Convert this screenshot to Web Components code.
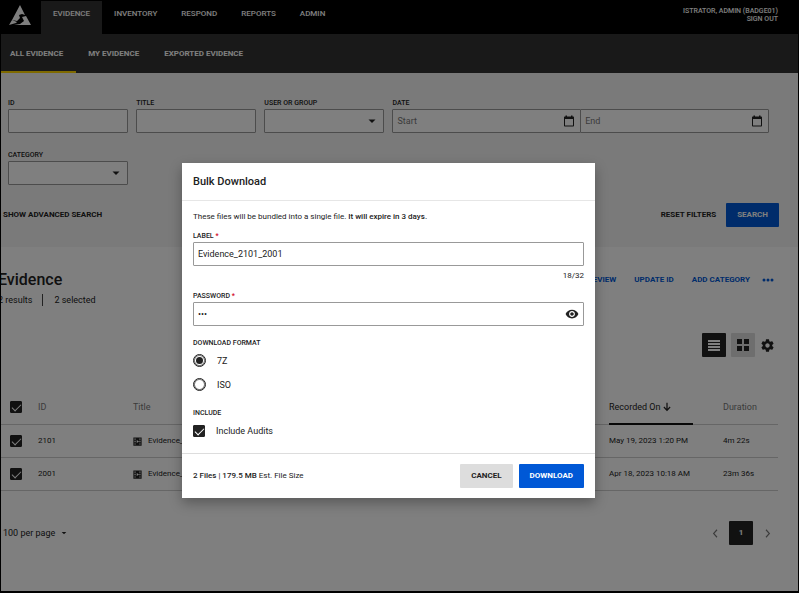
<!DOCTYPE html>
<html lang="en">
<head>
<meta charset="utf-8">
<meta name="viewport" content="width=device-width, initial-scale=1">
<title>Evidence</title>
<style>
    body {
        margin: 0;
        font-family: Roboto, "Liberation Sans", sans-serif;
        font-size: 9px;
        line-height: 12px;
        color: #222;
        background: #fff;
    }
</style>
</head>
<body>
<evidence-page></evidence-page>

<script>
const ICONS = {
    logo: `<path fill-rule="evenodd" d="M11 0l5 10-3-1-3 1 1 3-3 3-5-1zM17 11l5 9H5l6-1 4-3-2-4zM3 15l5 2-1 1-7 2z"/>`,
    caret: `<path d="M5 9h14l-7 7z"/>`,
    calendar: `<path d="M20 3h-1V1h-3v2H8V1H5v2H4c-1.100 0-2 .9-2 2v16c0 1.100.9 2 2 2h16c1.100 0 2-.9 2-2V5c0-1.100-.9-2-2-2zm0 18H4V8h16z"/>`,
    eye: `<path d="M12 4.500C7 4.500 2.730 7.610 1 12c1.730 4.390 6 7.500 11 7.500s9.270-3.110 11-7.500c-1.730-4.390-6-7.500-11-7.500zM12 17c-2.760 0-5-2.240-5-5s2.240-5 5-5 5 2.240 5 5-2.240 5-5 5zm0-8c-1.660 0-3 1.340-3 3s1.340 3 3 3 3-1.340 3-3-1.340-3-3-3z"/>`,
    dots: `<circle cx="4" cy="12" r="3"/><circle cx="12" cy="12" r="3"/><circle cx="20" cy="12" r="3"/>`,
    list: `<path d="M0 2h24v4H0zM0 8h24v4H0zM0 14h24v4H0zM0 20h24v4H0z"/>`,
    grid: `<path d="M0 0h10v10H0zM14 0h10v10H14zM0 14h10v10H0zM14 14h10v10H14z"/>`,
    gear: `<path d="M19.430 12.980c.04-.32.07-.64.07-.98s-.03-.66-.07-.98l2.110-1.650c.19-.15.24-.42.12-.64l-2-3.460c-.12-.22-.39-.3-.61-.22l-2.490 1c-.52-.4-1.080-.73-1.690-.98l-.38-2.650C14.460 2.180 14.250 2 14 2h-4c-.25 0-.46.18-.49.42l-.38 2.650c-.61.25-1.170.59-1.690.98l-2.490-1c-.23-.09-.49 0-.61.22l-2 3.460c-.13.22-.07.49.12.64l2.110 1.650c-.04.32-.07.65-.07.98s.03.66.07.98l-2.110 1.650c-.19.15-.24.42-.12.64l2 3.460c.12.22.39.3.61.22l2.490-1c.52.4 1.080.73 1.690.98l.38 2.650c.03.24.24.42.49.42h4c.25 0 .46-.18.49-.42l.38-2.650c.61-.25 1.170-.59 1.690-.98l2.490 1c.23.09.49 0 .61-.22l2-3.460c.12-.22.07-.49-.12-.64zM12 15.500c-1.930 0-3.500-1.570-3.500-3.500s1.570-3.500 3.500-3.500 3.500 1.570 3.500 3.500-1.570 3.500-3.500 3.500z"/>`,
    video: `<path fill-rule="evenodd" d="M1 1h22v22H1zM4 4v3h3V4zM4 10v4h3v-4zM4 17v3h3v-3zM17 4v3h3V4zM17 10v4h3v-4zM17 17v3h3v-3zM10 8v8l6-4z"/>`,
    arrow: `<path d="M10.500 2h3v14l5-5 2 2-8.500 9-8.500-9 2-2 5 5z"/>`,
    prev: `<path d="M16 2L7 12l9 10" fill="none" stroke="currentColor" stroke-width="3"/>`,
    next: `<path d="M8 2l9 10-9 10" fill="none" stroke="currentColor" stroke-width="3"/>`
};

const icon = (name, size) => {
    const box = name === "logo" ? "0 0 22 20" : "0 0 24 24";
    return `<svg width="${size}" height="${size}" viewBox="${box}" fill="currentColor" aria-hidden="true">${ICONS[name]}</svg>`;
};

// Shared by every shadow root
const BASE = `
    * { box-sizing: border-box; }
    button, input, select { font: inherit; color: inherit; margin: 0; border-radius: 0; }
    button { background: none; border: 0; padding: 0; cursor: pointer; }
    a { color: inherit; text-decoration: none; }
    svg { display: block; flex: none; }
`;

class AppHeader extends HTMLElement {
    constructor() {
        super();
        this.attachShadow({ mode: "open" }).innerHTML = `
        <style>
            ${BASE}
            :host {
                display: flex;
                height: 33px;
                background: #000;
                color: #fff;
                font-size: 8px;
                font-weight: 500;
            }
            .logo { padding: 3px 10px 0 8px; }
            nav { display: flex; flex: 1; }
            nav a { padding: 7px 12px 0; }
            nav a.active { background: #333; }
            .user {
                padding: 6px 20px 0 0;
                text-align: right;
                font-size: 7px;
                line-height: 8px;
            }
            .user a { display: block; }
        </style>
        <a class="logo" href="#" aria-label="Home">${icon("logo", 22)}</a>
        <nav>
            <a class="active" href="#">EVIDENCE</a>
            <a href="#">INVENTORY</a>
            <a href="#">RESPOND</a>
            <a href="#">REPORTS</a>
            <a href="#">ADMIN</a>
        </nav>
        <div class="user">ISTRATOR, ADMIN (BADGE01)<a href="#">SIGN OUT</a></div>
        `;
    }
}

class SubNav extends HTMLElement {
    constructor() {
        super();
        this.attachShadow({ mode: "open" }).innerHTML = `
        <style>
            ${BASE}
            :host {
                display: block;
                background: #333;
                color: #fff;
                font-size: 8px;
                font-weight: 700;
            }
            nav { display: flex; }
            a {
                height: 39px;
                padding: 14px 13px 0 12px;
                border-bottom: 2px solid transparent;
            }
            a:first-child { padding-left: 9px; }
            a.active { border-color: #ffd400; }
        </style>
        <nav>
            <a class="active" href="#">ALL EVIDENCE</a>
            <a href="#">MY EVIDENCE</a>
            <a href="#">EXPORTED EVIDENCE</a>
        </nav>
        `;
    }
}

class FormField extends HTMLElement {
    constructor() {
        super();
        this.attachShadow({ mode: "open" });
    }

    connectedCallback() {
        const label = this.getAttribute("label") || "";
        const type = this.getAttribute("type") || "text"; // text | password | select | dates
        const value = this.getAttribute("value") || "";
        const required = this.hasAttribute("required");

        const controls = {
            select: `<div class="box"><select id="control"><option></option></select>${icon("caret", 12)}</div>`,
            dates: `
                <div class="box"><input id="control" placeholder="Start"><button aria-label="Pick start date">${icon("calendar", 12)}</button></div>
                <div class="box"><input aria-label="End date" placeholder="End"><button aria-label="Pick end date">${icon("calendar", 12)}</button></div>`,
            password: `<div class="box"><input id="control" type="password" value="${value}"><button aria-label="Show password">${icon("eye", 14)}</button></div>`,
            text: `<div class="box"><input id="control" value="${value}"></div>`
        };

        this.shadowRoot.innerHTML = `
        <style>
            ${BASE}
            :host { display: block; min-width: 0; }
            label {
                display: block;
                margin-bottom: 1px;
                font-size: 7px;
                line-height: 9px;
                font-weight: 500;
            }
            em { color: #d0021b; font-style: normal; }
            .row { display: flex; }
            .box {
                display: flex;
                flex: 1;
                align-items: center;
                min-width: 0;
                height: 24px;
                border: 1px solid #999;
                border-radius: 1px;
                background: #fff;
            }
            .box + .box { margin-left: -1px; }
            input, select {
                flex: 1;
                min-width: 0;
                width: 100%;
                height: 22px;
                padding: 0 4px;
                border: 0;
                outline: 0;
                background: none;
                appearance: none;
            }
            input::placeholder { color: #777; opacity: 1; }
            .box > svg, .box > button { margin-right: 5px; }
            input[type=password] + button { margin-right: 4px; }
        </style>
        <label for="control">${label}${required ? " <em>*</em>" : ""}</label>
        <div class="row">${controls[type]}</div>
        `;
    }
}

class ChoiceInput extends HTMLElement {
    constructor() {
        super();
        this.attachShadow({ mode: "open" });
    }

    connectedCallback() {
        const type = this.getAttribute("type") || "checkbox"; // checkbox | radio
        const checked = this.hasAttribute("checked") ? "checked" : "";
        const name = this.getAttribute("label");

        this.shadowRoot.innerHTML = `
        <style>
            ${BASE}
            :host { display: block; }
            label { display: flex; align-items: center; gap: 11px; }
            input {
                display: grid;
                place-items: center;
                flex: none;
                appearance: none;
                width: 12px;
                height: 12px;
                border: 1px solid #222;
                border-radius: 1px;
            }
            input[type=checkbox]:checked { background: #222; }
            input[type=checkbox]:checked::before {
                content: "";
                width: 8px;
                height: 4px;
                border: solid #fff;
                border-width: 0 0 1px 1px;
                transform: translateY(-1px) rotate(-45deg);
            }
            input[type=radio] { width: 13px; height: 13px; border-radius: 50%; box-shadow: inset 0 0 0 1px #777; }
            input[type=radio]:checked::before {
                content: "";
                width: 7px;
                height: 7px;
                border-radius: 50%;
                background: #222;
            }
        </style>
        <label><input type="${type}" ${checked} ${name ? `aria-label="${name}"` : ""}><slot></slot></label>
        `;
    }
}

class ActionButton extends HTMLElement {
    constructor() {
        super();
        this.attachShadow({ mode: "open" }).innerHTML = `
        <style>
            ${BASE}
            :host { display: block; font-size: 8px; font-weight: 700; }
            button { height: 24px; white-space: nowrap; }
            :host([kind=primary]) button { padding: 0 11px; background: #0058d6; color: #fff; border-radius: 1px; }
            :host([kind=secondary]) button { padding: 0 11px; background: #ddd; border-radius: 1px; }
            :host([kind=link]) button { color: #0058d6; }
        </style>
        <button type="button"><slot></slot></button>
        `;
    }
}

class SearchFilters extends HTMLElement {
    constructor() {
        super();
        this.attachShadow({ mode: "open" }).innerHTML = `
        <style>
            ${BASE}
            :host {
                display: block;
                padding: 26px 19px 20px 2px;
                background: #f4f4f4;
            }
            .fields {
                display: grid;
                grid-template-columns: repeat(6, 1fr);
                gap: 18px 8px;
                padding: 0 10px 0 5px;
            }
            .wide { grid-column: span 3; }
            .actions {
                display: flex;
                align-items: center;
                gap: 10px;
                margin-top: 18px;
            }
            .actions :first-child { margin-right: auto; }
        </style>
        <div class="fields">
            <form-field label="ID"></form-field>
            <form-field label="TITLE"></form-field>
            <form-field label="USER OR GROUP" type="select"></form-field>
            <form-field class="wide" label="DATE" type="dates"></form-field>
            <form-field label="CATEGORY" type="select"></form-field>
        </div>
        <div class="actions">
            <action-button>SHOW ADVANCED SEARCH</action-button>
            <action-button>RESET FILTERS</action-button>
            <action-button kind="primary">SEARCH</action-button>
        </div>
        `;
    }
}

class EvidenceTable extends HTMLElement {
    constructor() {
        super();
        this.attachShadow({ mode: "open" });
    }

    connectedCallback() {
        const rows = [
            ["2101", "May 19, 2023 1:20 PM", "4m 22s"],
            ["2001", "Apr 18, 2023 10:18 AM", "23m 36s"]
        ];

        this.shadowRoot.innerHTML = `
        <style>
            ${BASE}
            :host { display: block; }
            table { width: 100%; border-spacing: 0; table-layout: fixed; }
            th, td {
                padding: 0;
                border-bottom: 1px solid #ccc;
                text-align: left;
                font-weight: 400;
                white-space: nowrap;
            }
            th { height: 35px; color: #777; }
            td { height: 33px; font-size: 8px; }
            th:first-child, td:first-child { padding-left: 9px; }
            .check { width: 37px; }
            .id { width: 95px; }
            .recorded { width: 114px; }
            .duration { width: 55px; }
            .sort {
                display: flex;
                align-items: center;
                gap: 2px;
                width: 84px;
                height: 34px;
                margin-bottom: -1px;
                border-bottom: 2px solid #111;
                color: #222;
            }
            .file { display: flex; align-items: center; gap: 6px; }
        </style>
        <table>
            <thead>
                <tr>
                    <th class="check"><choice-input checked label="Select all"></choice-input></th>
                    <th class="id">ID</th>
                    <th>Title</th>
                    <th class="recorded"><button class="sort">Recorded On ${icon("arrow", 10)}</button></th>
                    <th class="duration">Duration</th>
                </tr>
            </thead>
            <tbody>
                ${rows.map(([id, date, length]) => `
                <tr>
                    <td><choice-input checked label="Select ${id}"></choice-input></td>
                    <td>${id}</td>
                    <td><div class="file">${icon("video", 9)}Evidence_</div></td>
                    <td>${date}</td>
                    <td>${length}</td>
                </tr>`).join("")}
            </tbody>
        </table>
        `;
    }
}

class EvidenceResults extends HTMLElement {
    constructor() {
        super();
        this.attachShadow({ mode: "open" }).innerHTML = `
        <style>
            ${BASE}
            :host { display: block; padding: 23px 20px 0 0; }
            .top { display: flex; justify-content: space-between; align-items: flex-start; }
            .heading { margin-left: -3px; }
            h1 { margin: 0; font-size: 16px; line-height: 20px; font-weight: 500; }
            .counts { display: flex; margin-top: 4px; }
            .counts span + span { margin-left: 10px; padding-left: 11px; border-left: 1px solid #444; }
            .links { display: flex; gap: 18px; margin: -2px 4px 0 0; }
            .links action-button:last-child { margin-left: -6px; }
            .views { display: flex; justify-content: flex-end; align-items: center; gap: 5px; margin: 27px 3px 33px 0; }
            .views button { display: grid; place-items: center; height: 24px; }
            .views .tile { width: 24px; background: #ddd; border-radius: 1px; }
            .views .active { background: #222; color: #fff; }
            .pager { display: flex; align-items: center; padding: 30px 5px 0 2px; }
            .size { display: flex; align-items: center; gap: 4px; margin-right: auto; }
            select { appearance: none; border: 0; background: none; padding: 0; }
            .pager button { width: 12px; height: 24px; display: grid; place-items: center; color: #777; }
            .pager .page { width: 24px; margin: 0 8px; background: #222; color: #fff; border-radius: 1px; font-weight: 700; font-size: 8px; }
        </style>
        <div class="top">
            <div class="heading">
                <h1>Evidence</h1>
                <div class="counts"><span>2 results</span><span>2 selected</span></div>
            </div>
            <div class="links">
                <action-button kind="link">REVIEW</action-button>
                <action-button kind="link">UPDATE ID</action-button>
                <action-button kind="link">ADD CATEGORY</action-button>
                <action-button kind="link" aria-label="More actions">${icon("dots", 12)}</action-button>
            </div>
        </div>
        <div class="views">
            <button class="tile active" aria-label="List view">${icon("list", 12)}</button>
            <button class="tile" aria-label="Grid view">${icon("grid", 12)}</button>
            <button aria-label="Settings">${icon("gear", 15)}</button>
        </div>
        <evidence-table></evidence-table>
        <div class="pager">
            <label class="size"><select aria-label="Rows per page"><option>100 per page</option></select>${icon("caret", 8)}</label>
            <button aria-label="Previous page">${icon("prev", 9)}</button>
            <button class="page">1</button>
            <button aria-label="Next page">${icon("next", 9)}</button>
        </div>
        `;
    }
}

class ModalDialog extends HTMLElement {
    constructor() {
        super();
        this.attachShadow({ mode: "open" }).innerHTML = `
        <style>
            ${BASE}
            :host {
                position: absolute;
                inset: 0;
                padding: 162px 203px 0 181px;
                background: rgba(0,0,0,0.5);
            }
            section {
                background: #fff;
                box-shadow: 0 5px 12px rgba(0,0,0,0.3);
            }
            header { padding: 12px 11px 11px; border-bottom: 1px solid #e6e6e6; }
            h2 { margin: 0; font-size: 11px; line-height: 14px; font-weight: 500; }
            .body { padding: 10px 11px 16px; }
            footer {
                display: flex;
                align-items: center;
                gap: 6px;
                padding: 10px 11px;
                border-top: 1px solid #ddd;
                font-size: 8px;
            }
            .note { margin-right: auto; }
        </style>
        <section role="dialog" aria-modal="true" aria-labelledby="title">
            <header><h2 id="title"><slot name="title"></slot></h2></header>
            <div class="body"><slot></slot></div>
            <footer>
                <div class="note"><slot name="note"></slot></div>
                <slot name="actions"></slot>
            </footer>
        </section>
        `;
    }
}

class BulkDownload extends HTMLElement {
    constructor() {
        super();
        this.attachShadow({ mode: "open" }).innerHTML = `
        <style>
            ${BASE}
            :host { display: block; }
            b { font-weight: 500; }
            p { margin: 0 0 9px; font-size: 8px; }
            .counter { margin: 4px 0 10px; text-align: right; font-size: 8px; }
            fieldset { margin: 0; padding: 0; border: 0; }
            legend { padding: 0; font-size: 7px; line-height: 9px; font-weight: 500; }
            .format { margin: 13px 0 13px; }
            .format choice-input { margin-top: 6px; height: 18px; }
            .include choice-input { margin-top: 7px; }
        </style>
        <modal-dialog>
            <span slot="title">Bulk Download</span>
            <p>These files will be bundled into a single file. <b>It will expire in 3 days.</b></p>
            <form-field label="LABEL" value="Evidence_2101_2001" required></form-field>
            <div class="counter">18/32</div>
            <form-field label="PASSWORD" type="password" value="abc" required></form-field>
            <fieldset class="format">
                <legend>DOWNLOAD FORMAT</legend>
                <choice-input type="radio" checked>7Z</choice-input>
                <choice-input type="radio">ISO</choice-input>
            </fieldset>
            <fieldset class="include">
                <legend>INCLUDE</legend>
                <choice-input checked>Include Audits</choice-input>
            </fieldset>
            <span slot="note"><b>2 Files</b> | <b>179.5 MB</b> Est. File Size</span>
            <action-button slot="actions" kind="secondary">CANCEL</action-button>
            <action-button slot="actions" kind="primary">DOWNLOAD</action-button>
        </modal-dialog>
        `;
    }
}

class EvidencePage extends HTMLElement {
    constructor() {
        super();
        this.attachShadow({ mode: "open" }).innerHTML = `
        <style>
            ${BASE}
            :host {
                display: block;
                box-sizing: border-box;
                position: relative;
                min-height: 100vh;
                border: 1px solid #000;
                border-bottom-width: 2px;
                overflow: hidden;
            }
        </style>
        <app-header></app-header>
        <sub-nav></sub-nav>
        <search-filters></search-filters>
        <evidence-results></evidence-results>
        <bulk-download></bulk-download>
        `;
    }
}

customElements.define("app-header", AppHeader);
customElements.define("sub-nav", SubNav);
customElements.define("form-field", FormField);
customElements.define("choice-input", ChoiceInput);
customElements.define("action-button", ActionButton);
customElements.define("search-filters", SearchFilters);
customElements.define("evidence-table", EvidenceTable);
customElements.define("evidence-results", EvidenceResults);
customElements.define("modal-dialog", ModalDialog);
customElements.define("bulk-download", BulkDownload);
customElements.define("evidence-page", EvidencePage);
</script>
</body>
</html>
